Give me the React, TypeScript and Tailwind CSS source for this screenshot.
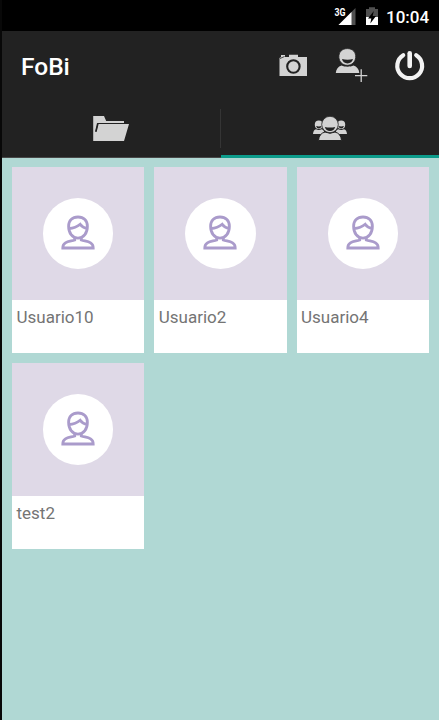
const users = ['Usuario10', 'Usuario2', 'Usuario4', 'test2'];

function StatusBar() {
  return (
    <div className="flex h-[31px] shrink-0 items-center bg-black pr-[9px] text-white">
      <svg className="ml-auto" width="48" height="31" viewBox="332 0 48 31">
        <path d="M355.5 8V25H338.5Z" fill="#505050" />
        <path d="M351.5 12V25H338.5Z" fill="#fff" />
        <path d="M332 6H346V16H332Z" fill="#000" />
        <text x="334.5" y="15.5" fill="#fff" className="font-[Roboto,sans-serif] text-[10px] font-bold" textLength="11" lengthAdjust="spacingAndGlyphs">3G</text>
        <path d="M369 7.3H375V9H378V25H366V9H369Z" fill="#505050" />
        <path d="M366 17H378V25H366Z" fill="#fff" />
        <path d="M373.8 11L368 18.5H371.3L370.3 23.5L376 16H372.7Z" fill="#000" />
      </svg>
      <span className="ml-[6px] mt-[4px] w-[44px] text-[17px] leading-none font-medium">10:04</span>
    </div>
  );
}

function Toolbar() {
  return (
    <div className="flex h-[71px] shrink-0 items-center justify-between pl-[19px]">
      <h1 className="pt-[2px] text-[24.5px] leading-none font-medium text-white">FoBi</h1>
      <svg width="169" height="71" viewBox="270 31 169 71">
        <path d="M279.5 58L281 57V55H285V57H289V54.7H298V57H307V76H279.5Z" fill="#d3d3d3" />
        <path d="M280 58.5L284.5 56.5" stroke="#222" strokeWidth=".8" />
        <circle cx="293.4" cy="66.5" r="6.2" fill="#d3d3d3" stroke="#222" strokeWidth="2.1" />
        <path d="M335.8 73C336.2 69 338 66.7 341.5 65.5C345 67.1 350 67.1 353.5 65.5C356.8 66.7 359 69 359.3 73Z" fill="#d3d3d3" />
        <path d="M347.3 48.6C352.9 48.6 356 52.5 355.7 57.3C355.3 62 351.9 65.3 347.3 65.3S339.2 62 338.9 57.3C338.6 52.5 341.8 48.6 347.3 48.6Z" fill="#d3d3d3" stroke="#222" strokeWidth=".8" />
        <path d="M342 59C345.5 60 349.5 60 353 59C352.5 61.8 350.2 63.4 347.5 63.4S342.4 61.8 342 59Z" fill="#222" />
        <path d="M361.2 69.3V82M355 75.7H367.3" stroke="#d3d3d3" strokeWidth="1.3" />
        <path d="M403.2 55.2A12.4 12.4 0 1 0 416.2 55.2" fill="none" stroke="#f3f3f3" strokeWidth="4.2" strokeLinecap="round" />
        <path d="M409.7 53.2V66" stroke="#f3f3f3" strokeWidth="4.6" strokeLinecap="round" />
      </svg>
    </div>
  );
}

function FolderIcon() {
  return (
    <svg width="38" height="28" viewBox="92 115 38 28">
      <path d="M93.2 116H104L106.2 121H124V123H97.7L95.3 131.7H96.7L98.6 124H129L124 141H93.2Z" fill="#d3d3d3" />
      <path d="M97.6 123.4L95.7 131.6" stroke="#222" strokeWidth="1.3" />
      <path d="M97.3 123.5H124" stroke="#222" />
    </svg>
  );
}

function GroupMember({ x }: { x: number }) {
  return (
    <g transform={`translate(${x} 0)`}>
      <ellipse cx="0" cy="124.8" rx="4" ry="4.2" fill="#d3d3d3" />
      <path d="M-2.8 126Q0 126.8 2.8 126Q1.8 128.5 0 128.5T-2.8 126Z" fill="#222" />
      <path d="M-5.8 134Q-5.5 130 -2.8 129.3Q0 130.5 2.8 129.3Q5.5 130 5.8 134Z" fill="#d3d3d3" />
    </g>
  );
}

function GroupIcon() {
  return (
    <svg width="38" height="28" viewBox="311 115 38 28">
      <GroupMember x={318.8} />
      <GroupMember x={341.2} />
      <path d="M318.5 140.5Q319 133.5 325 132Q330 134.5 335 132Q341 133.5 341.5 140.5Z" fill="#d3d3d3" stroke="#222" />
      <ellipse cx="330" cy="124.5" rx="8.3" ry="8.2" fill="#d3d3d3" stroke="#222" strokeWidth=".8" />
      <path d="M324.8 127Q330 128 335.2 127Q334 130.9 330 130.9T324.8 127Z" fill="#222" />
    </svg>
  );
}

function Tabs() {
  return (
    <div className="flex h-14 shrink-0">
      <div className="flex w-[219px] items-center justify-center border-b border-[#484848]">
        <div className="flex flex-1 justify-center pb-[2px]"><FolderIcon /></div>
        <div className="mb-[3px] h-[39px] w-px bg-[#353535]" />
      </div>
      <div className="flex flex-1 items-center justify-center border-b-[3px] border-[#0c9c8b]">
        <GroupIcon />
      </div>
    </div>
  );
}

function Avatar() {
  return (
    <div className="flex size-[70.5px] items-center justify-center rounded-full bg-white pb-[3px]">
      <svg width="36" height="36" viewBox="0 0 36 36" fill="none" stroke="#aa9bcb" strokeWidth="2.8">
        <path d="M18 3C12.2 3 8.6 6.7 8.6 12.3C8.6 19 12.2 24.1 18 24.1S27.4 19 27.4 12.3C27.4 6.7 23.8 3 18 3Z" />
        <path d="M8.9 14.5C13.5 14.3 17.3 12.8 20.2 10.3Q22.7 14 27.1 14.3" />
        <path d="M14.7 23.5V26C10 27.7 2.8 27.2 2.8 34H33.2C33.2 27.2 26 27.7 21.3 26V23.5" />
      </svg>
    </div>
  );
}

function UserCard({ name }: { name: string }) {
  return (
    <article className="h-[186px] bg-white">
      <div className="flex h-[133px] items-center justify-center bg-[#dfd9e7]"><Avatar /></div>
      <p className="px-[4.5px] pt-[7px] text-[17px] leading-5 text-[#747474]">{name}</p>
    </article>
  );
}

export default function App() {
  return (
    <main className="flex h-[720px] w-[439px] flex-col overflow-hidden border-l-2 border-[#080808] bg-[#222] font-[Roboto,sans-serif]">
      <StatusBar />
      <Toolbar />
      <Tabs />
      <section className="grid flex-1 grid-cols-[132.4px_132.4px_132.4px] content-start gap-x-[9.9px] gap-y-[10px] bg-[#b0d8d4] px-[10px] pt-[9px]">
        {users.map((name) => <UserCard key={name} name={name} />)}
      </section>
    </main>
  );
}
